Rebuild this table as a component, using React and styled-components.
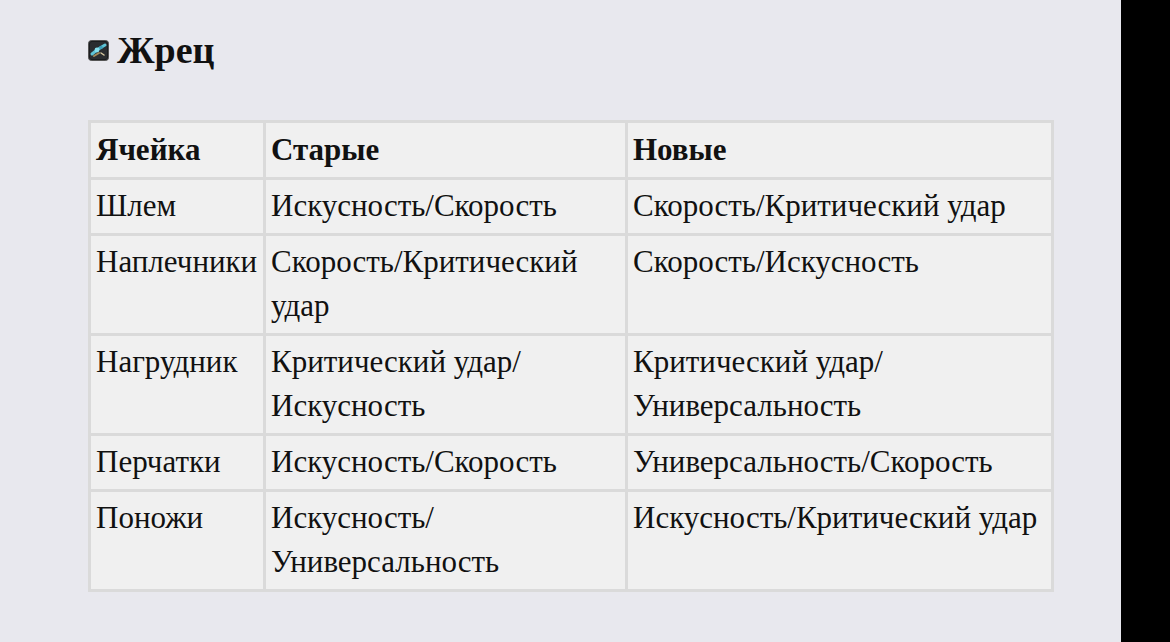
import React from 'react';
import styled, { createGlobalStyle } from 'styled-components';

const GlobalStyle = createGlobalStyle`
html, body {
  margin: 0;
  padding: 0;
  background: #e8e8ee;
}
`;

const Screen = styled.div`
display: flex;
width: 1170px;
height: 642px;
overflow: hidden;
`;
const Page = styled.main`
flex: 1;
background-color: #e8e8ee;
padding: 25px 0 0 88px;
font-family: "Liberation Serif", "Times New Roman", serif;
color: #111;
`;
const Edge = styled.aside`
width: 49px;
background-color: #000;
`;
const Title = styled.h2`
display: flex;
align-items: center;
gap: 8px;
margin: 0 0 45px;
font-size: 38px;
line-height: 50px;
font-weight: bold;
`;
const Table = styled.table`
border-collapse: collapse;
width: 963px;
table-layout: fixed;
font-size: 31px;
`;
const Col = styled.col`
width: ${p => p.$w}px;
`;
const Cell = styled.td`
border: 3px solid #dadada;
background-color: #f0f0f0;
padding: 4px 5px 5px;
line-height: 44px;
vertical-align: top;
text-align: left;
font-weight: normal;
`;
const HeadCell = styled(Cell).attrs({ as: 'th' })`
font-weight: bold;
padding: 5px 5px 5px;
`;

const PriestIcon = () => (
  <svg width="21" height="21" viewBox="0 0 21 21">
    <rect x="0.5" y="0.5" width="20" height="20" rx="3" fill="#1b1d1f" stroke="#555" />
    <rect x="2" y="2" width="17" height="17" rx="1.5" fill="#2a2d30" />
    <path d="M4 14 L9 10 L12 8 L17 5" stroke="#5fc4d6" strokeWidth="3" strokeLinecap="round" fill="none" />
    <circle cx="9" cy="10" r="2.4" fill="#86e0ee" />
    <circle cx="13" cy="7.5" r="1.8" fill="#3da0b8" />
    <path d="M6 16 L11 13" stroke="#a08a5a" strokeWidth="2" strokeLinecap="round" />
    <path d="M13 13 L16 15" stroke="#d9c9a0" strokeWidth="1.5" strokeLinecap="round" />
  </svg>
);

const head = ['Ячейка', 'Старые', 'Новые'];
const widths = [175, 362, 426];
const rows = [
  ['Шлем', 'Искусность/Скорость', 'Скорость/Критический удар'],
  ['Наплечники', 'Скорость/Критический удар', 'Скорость/Искусность'],
  ['Нагрудник', 'Критический удар/ Искусность', 'Критический удар/ Универсальность'],
  ['Перчатки', 'Искусность/Скорость', 'Универсальность/Скорость'],
  ['Поножи', 'Искусность/ Универсальность', 'Искусность/Критический удар'],
];

const App = () => (
  <>
    <GlobalStyle />
    <Screen>
      <Page>
        <Title>
          <PriestIcon />
          Жрец
        </Title>
        <Table>
          <colgroup>
            {widths.map((w, i) => <Col key={i} $w={w} />)}
          </colgroup>
          <thead>
            <tr>
              {head.map(t => <HeadCell key={t}>{t}</HeadCell>)}
            </tr>
          </thead>
          <tbody>
            {rows.map(r => (
              <tr key={r[0]}>
                {r.map(t => <Cell key={t}>{t}</Cell>)}
              </tr>
            ))}
          </tbody>
        </Table>
      </Page>
      <Edge />
    </Screen>
  </>
);

export default App;
